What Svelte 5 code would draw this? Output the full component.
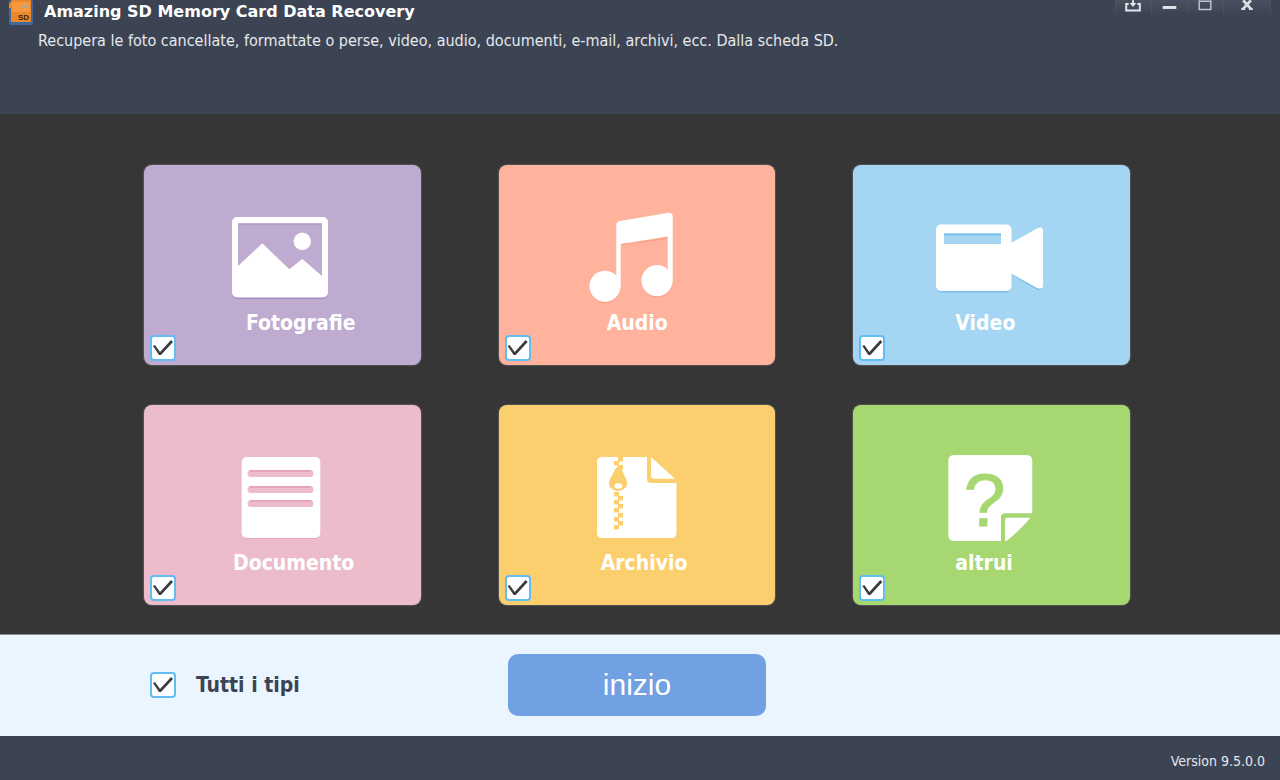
<script>
    let types = $state([
        { id: 'photo', label: 'Fotografie', checked: true },
        { id: 'audio', label: 'Audio', checked: true },
        { id: 'video', label: 'Video', checked: true },
        { id: 'document', label: 'Documento', checked: true },
        { id: 'archive', label: 'Archivio', checked: true },
        { id: 'other', label: 'altrui', checked: true }
    ]);

    let allChecked = $derived(types.every(t => t.checked));

    // zipper teeth, left and right column
    const teethLeft = [56, 87, 95, 103, 112, 120];
    const teethRight = [52, 60, 91, 99, 108, 116];

    function toggleAll(e) {
        const value = e.currentTarget.checked;
        types.forEach(t => t.checked = value);
    }
</script>

<div class="window">
    <header>
        <div class="titlebar">
            <svg class="logo" viewBox="0 0 24 25" aria-hidden="true">
                <rect width="24" height="25" rx="2" fill="#41699c" />
                <path d="M0 4 L3 0 H22 V22 H2 V8 H0 Z" fill="#e9872b" />
                <path d="M3 2 H21 V12 H3 Z" fill="#f6983b" />
                <rect x="13" y="5" width="6" height="3" rx="1" fill="#b9a58d" />
                <text x="9" y="20" font-size="8" font-weight="bold" fill="#45240a">SD</text>
            </svg>
            <h1>Amazing SD Memory Card Data Recovery</h1>
            <div class="controls">
                <button aria-label="Aggiorna">
                    <svg viewBox="0 0 36 14"><path d="M13 4 H10.5 V10.5 H24.5 V4 H22 M17.5 0 V5" fill="none" stroke="#e4e6ea" stroke-width="2" /><path d="M14 3 H21 L17.5 7 Z" fill="#e4e6ea" /></svg>
                </button>
                <button aria-label="Riduci">
                    <svg viewBox="0 0 36 14"><path d="M11 7.5 H25" stroke="#e4e6ea" stroke-width="3" /></svg>
                </button>
                <button aria-label="Ingrandisci">
                    <svg viewBox="0 0 36 14"><path d="M11.5 0 V9.5 H23.5 V0 M11 1 H24" fill="none" stroke="#bfc5ce" stroke-width="1.5" /></svg>
                </button>
                <button class="close" aria-label="Chiudi">
                    <svg viewBox="0 0 48 14"><path d="M20 0 L28 9 M28 0 L20 9" stroke="#d9dce1" stroke-width="3" /><path d="M18 9 H22 M26 9 H30" stroke="#d9dce1" stroke-width="2" /></svg>
                </button>
            </div>
        </div>
        <p>Recupera le foto cancellate, formattate o perse, video, audio, documenti, e-mail, archivi, ecc. Dalla scheda SD.</p>
    </header>

    <main>
        {#each types as type (type.id)}
            <label class="tile {type.id}">
                <svg class="icon" viewBox="78 44 120 96" aria-hidden="true">
                    {#if type.id === 'photo'}
                        <rect x="88" y="53" width="96" height="81" rx="5" fill="#a78bbd" />
                        <rect x="88" y="52" width="96" height="80.5" rx="5" fill="#fff" />
                        <path d="M94 58.5 H178 V111 L158.3 94 L145.3 104.3 L118.3 78.3 L94 101 Z" fill="#bfaad0" />
                        <path d="M94 59 H178" stroke="#a78bbd" />
                        <circle cx="158.3" cy="76.3" r="8.7" fill="#fff" />
                    {:else if type.id === 'audio'}
                        <g fill="#f99b81" transform="translate(0 1)">
                            <circle cx="106" cy="121.3" r="15.6" />
                            <circle cx="158" cy="115.7" r="15.6" />
                            <path d="M121.5 79 L169 71.5 V77 H121.5 Z" />
                        </g>
                        <path d="M121.5 81 L169 73.5 V103 H173 V115 H121.5 Z" fill="#ffb29c" />
                        <circle cx="106" cy="121.3" r="15.6" fill="#fff" />
                        <circle cx="158" cy="115.7" r="15.6" fill="#fff" />
                        <path d="M117.3 121 V60 Q117.3 56.5 121 56 L168 48 Q173.7 47 173.7 52 V116 H168.7 V71.5 L121.7 79 V121 Z" fill="#fff" />
                    {:else if type.id === 'video'}
                        <path d="M157 109.5 L183 124.5 Q186 126 188 123.5 V118 L157 106 Z M86 127.5 H153 L157 123 H82 Z" fill="#7bbfe8" />
                        <rect x="82" y="59.5" width="75.5" height="66.5" rx="5" fill="#fff" />
                        <path d="M157 78 L183 63.5 Q189 60.5 189 66 V120 Q189 125.5 183 123 L157 108.5 Z" fill="#fff" />
                        <rect x="90" y="68.5" width="57" height="10.5" fill="#a4d5f3" />
                        <path d="M90 69.5 H147" stroke="#78c3e9" stroke-width="2" />
                    {:else if type.id === 'document'}
                        <rect x="98" y="54" width="78" height="80" rx="5" fill="#e3a3b8" />
                        <rect x="97.7" y="52" width="78.6" height="81" rx="5" fill="#fff" />
                        {#each [65, 81, 95] as y}
                            <rect x="103.5" {y} width="66" height="7" rx="3.5" fill="#ecbccb" />
                            <path d="M106 {y + 1} H167" stroke="#e5a5bb" stroke-width="2" />
                        {/each}
                    {:else if type.id === 'archive'}
                        <path d="M103 52 H148 V74 Q148 78 152 78 H177.5 V128 Q177.5 133 172.5 133 H103 Q98 133 98 128 V57 Q98 52 103 52 Z" fill="#fff" />
                        <path d="M152 52 L176 73.7 H155 Q152 73.7 152 71 Z" fill="#fff" />
                        {#each teethLeft as y}
                            <rect x="115" {y} width="5" height="4.4" fill="#fbce6e" />
                        {/each}
                        {#each teethRight as y}
                            <rect x="119" {y} width="5" height="4.4" fill="#fbce6e" />
                        {/each}
                        <path d="M117 63 Q119 61 122 63 L127 74 Q130 81 125 84 Q119 88 113 84 Q108 81 111 74 Z" fill="#fbce6e" />
                        <ellipse cx="119.3" cy="81" rx="4" ry="2.7" fill="#fff" />
                    {:else}
                        <path d="M100 50 H172.5 Q178.3 50 178.3 56 V108.3 H151 Q147 108.3 147 112 V136 H100 Q94.3 136 94.3 130 V56 Q94.3 50 100 50 Z" fill="#fff" />
                        <path d="M151 115 Q151 112.7 153 112.7 H176.5 Q165 126 152.5 136 H151 Z" fill="#fff" />
                        <text x="130.500" y="121" text-anchor="middle" font-size="75" fill="#a6d770" stroke="#a6d770">?</text>
                    {/if}
                </svg>
                <span class="name">{type.label}</span>
                <input type="checkbox" bind:checked={type.checked} />
            </label>
        {/each}
    </main>

    <section class="actions">
        <label class="all">
            <input type="checkbox" checked={allChecked} onchange={toggleAll} />
            <span>Tutti i tipi</span>
        </label>
        <button class="start">inizio</button>
    </section>

    <footer>Version 9.5.0.0</footer>
</div>

<style>
    :global(body) { margin: 0; background: #3c4454; }

    .window {
        display: flex;
        flex-direction: column;
        min-height: 100vh;
        background: #3c4454;
        color: #e6e8ec;
        font-family: "DejaVu Sans Condensed", Tahoma, "Noto Sans", sans-serif;
    }

    header { height: 114px; }
    .titlebar { display: flex; align-items: flex-start; padding: 0 9px; }
    .logo { width: 24px; height: 25px; font-family: "Liberation Sans", sans-serif; }
    h1 { margin: 0 0 0 11px; font-family: "DejaVu Sans", Tahoma, sans-serif; font-size: 16px; line-height: 24px; color: #fff; white-space: nowrap; }
    header p { margin: 4px 38px 0; font-size: 16px; line-height: 24px; }

    .controls { display: flex; margin-left: auto; }
    .controls button {
        width: 36px;
        height: 14px;
        padding: 0;
        border: 0;
        border-left: 1px solid #4b5261;
        background: linear-gradient(#4a5060, #3c4454);
    }
    .controls .close { width: 48px; border-right: 1px solid #4b5261; }
    .controls svg { display: block; width: 100%; height: 14px; }

    main {
        display: grid;
        grid-template-columns: repeat(3, 1fr);
        align-content: start;
        gap: 40px 78px;
        flex: 1;
        padding: 51px 150px 29px 144px;
        background: #363636;
    }

    .tile {
        display: grid;
        grid-template-rows: 144px 26px 26px;
        box-sizing: border-box;
        height: 200px;
        border-radius: 8px;
        box-shadow: 0 0 1px 1px rgba(255, 255, 255, 0.15);
        color: #fff;
        cursor: pointer;
    }
    .icon { width: 120px; height: 96px; margin: 44px auto 4px; font-family: "Liberation Sans", sans-serif; }
    .name { padding-left: 102px; font-size: 21px; font-weight: bold; line-height: 28px; }
    .tile input { margin-left: 6px; }

    .photo { background: #bfaad0; }
    .audio { background: #ffb29c; }
    .video { background: #a4d5f3; }
    .document { background: #ecbccb; }
    .archive { background: #fbce6e; }
    .other { background: #a6d770; }
    .audio .name { padding-left: 108px; }
    .document .name { padding-left: 89px; }

    input {
        appearance: none;
        box-sizing: border-box;
        width: 26px;
        height: 26px;
        margin: 0;
        border: 2px solid #62bdf5;
        border-radius: 4px;
        background: #fff;
    }
    input:checked::before {
        content: "";
        display: block;
        width: 22px;
        height: 22px;
        background: #3d3d3d;
        clip-path: polygon(1px 9px, 3px 8px, 8px 15px, 19px 3px, 21px 5px, 9px 18px, 7px 18px);
    }

    .actions {
        display: grid;
        grid-template-columns: repeat(3, 1fr);
        column-gap: 78px;
        align-items: center;
        padding: 19px 150px 20px 144px;
        border-top: 1px solid #8b8f92;
        background: #ebf5ff;
    }
    .all { display: flex; align-items: center; gap: 20px; padding-left: 6px; color: #3c4454; font-size: 21px; font-weight: bold; }
    .start {
        height: 62px;
        margin: 0 9px;
        border: 0;
        border-radius: 10px;
        background: #71a0e3;
        color: #fff;
        font-family: "Liberation Sans", Arial, sans-serif;
        font-size: 30px;
    }

    footer { padding: 13px 15px 7px; font-size: 14px; line-height: 24px; text-align: right; }
</style>
